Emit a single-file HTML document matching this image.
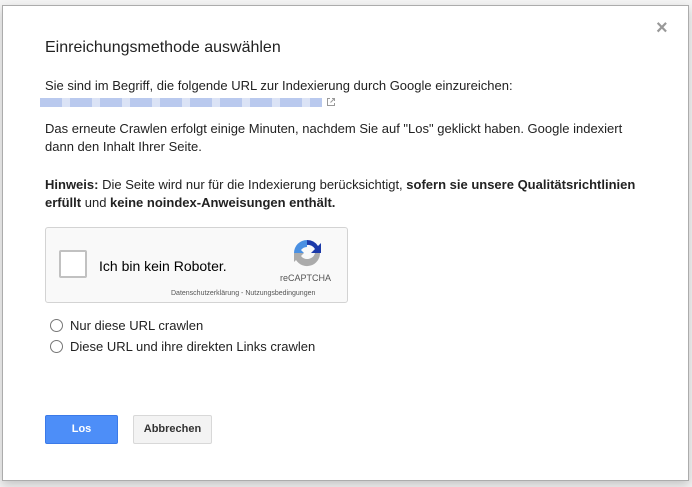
<!DOCTYPE html>
<html><head><meta charset="utf-8"><style>
body{margin:0;width:692px;height:487px;background:#f4f4f4;font-family:"Liberation Sans",Arial,sans-serif;color:#222;position:relative;overflow:hidden}
.dlg{position:absolute;left:2px;top:5px;width:685px;height:474px;background:#fff;border:1px solid #acacac;box-shadow:0 4px 10px rgba(0,0,0,.2)}
.a{position:absolute;font-size:13px;line-height:18px;white-space:nowrap}
.x{position:absolute;left:656px;top:17px;font-size:20px;color:#999;font-weight:bold}
.cap{position:absolute;left:45px;top:227px;width:301px;height:74px;background:#f9f9f9;border:1px solid #d3d3d3;border-radius:3px}
.cb{position:absolute;left:13px;top:22px;width:24px;height:24px;border:2px solid #c1c1c1;border-radius:2px;background:#fff}
.radio{position:absolute;width:11px;height:11px;border:1px solid #777;border-radius:50%}
.btn{position:absolute;top:415px;height:27px;font-size:11px;font-weight:bold;line-height:27px;text-align:center;border-radius:2px}
</style></head><body>
<div class="dlg"></div>
<div class="x">×</div>
<div class="a" style="left:45px;top:38px;font-size:16px;line-height:20px">Einreichungsmethode auswählen</div>
<div class="a" style="left:45px;top:77px">Sie sind im Begriff, die folgende URL zur Indexierung durch Google einzureichen:</div>
<div style="position:absolute;left:40px;top:98px;width:282px;height:9px;background:repeating-linear-gradient(90deg,#b9c9ee 0 22px,#dbe3f6 22px 30px)"></div>
<svg style="position:absolute;left:326px;top:97px" width="10" height="10" viewBox="0 0 10 10" fill="none" stroke="#999" stroke-width="1"><path d="M4 1.5H1.5v7h7V6M6 1.5h2.5V4M8.5 1.5L4.5 5.5"/></svg>
<div class="a" style="left:45px;top:120px">Das erneute Crawlen erfolgt einige Minuten, nachdem Sie auf "Los" geklickt haben. Google indexiert</div>
<div class="a" style="left:45px;top:138px">dann den Inhalt Ihrer Seite.</div>
<div class="a" style="left:45px;top:176px"><b>Hinweis:</b> Die Seite wird nur für die Indexierung berücksichtigt, <b>sofern sie unsere Qualitätsrichtlinien</b></div>
<div class="a" style="left:45px;top:194px"><b>erfüllt</b> und <b>keine noindex-Anweisungen enthält.</b></div>
<div class="cap"><div class="cb"></div>
<div class="a" style="left:53px;top:29px;font-size:14px;color:#000">Ich bin kein Roboter.</div>
<svg style="position:absolute;left:245px;top:9px" width="32" height="32" viewBox="0 0 32 32"><path d="M16 3a13 13 0 0 1 11 6l3-3v10H20l4-4a8 8 0 0 0-8-4z" fill="#1c3aa9"/><path d="M3 16A13 13 0 0 1 16 3v7a8 8 0 0 0-6 3l3 3H3z" fill="#4a90e2"/><path d="M29 16a13 13 0 0 1-24 7l-2 2V16h10l-3 3a8 8 0 0 0 14-3z" fill="#ababab"/></svg>
<div class="a" style="left:234px;top:45px;font-size:9px;color:#555;line-height:10px">reCAPTCHA</div>
<div class="a" style="left:125px;top:61px;font-size:7px;color:#555;line-height:9px">Datenschutzerklärung - Nutzungsbedingungen</div>
</div>
<div class="radio" style="left:50px;top:319px"></div>
<div class="a" style="left:70px;top:317px">Nur diese URL crawlen</div>
<div class="radio" style="left:50px;top:340px"></div>
<div class="a" style="left:70px;top:338px">Diese URL und ihre direkten Links crawlen</div>
<div class="btn" style="left:45px;width:71px;background:#4d8ef8;border:1px solid #3b7ae8;color:#fff">Los</div>
<div class="btn" style="left:133px;width:77px;background:#f3f3f3;border:1px solid #d8d8d8;color:#333">Abbrechen</div>
</body></html>
